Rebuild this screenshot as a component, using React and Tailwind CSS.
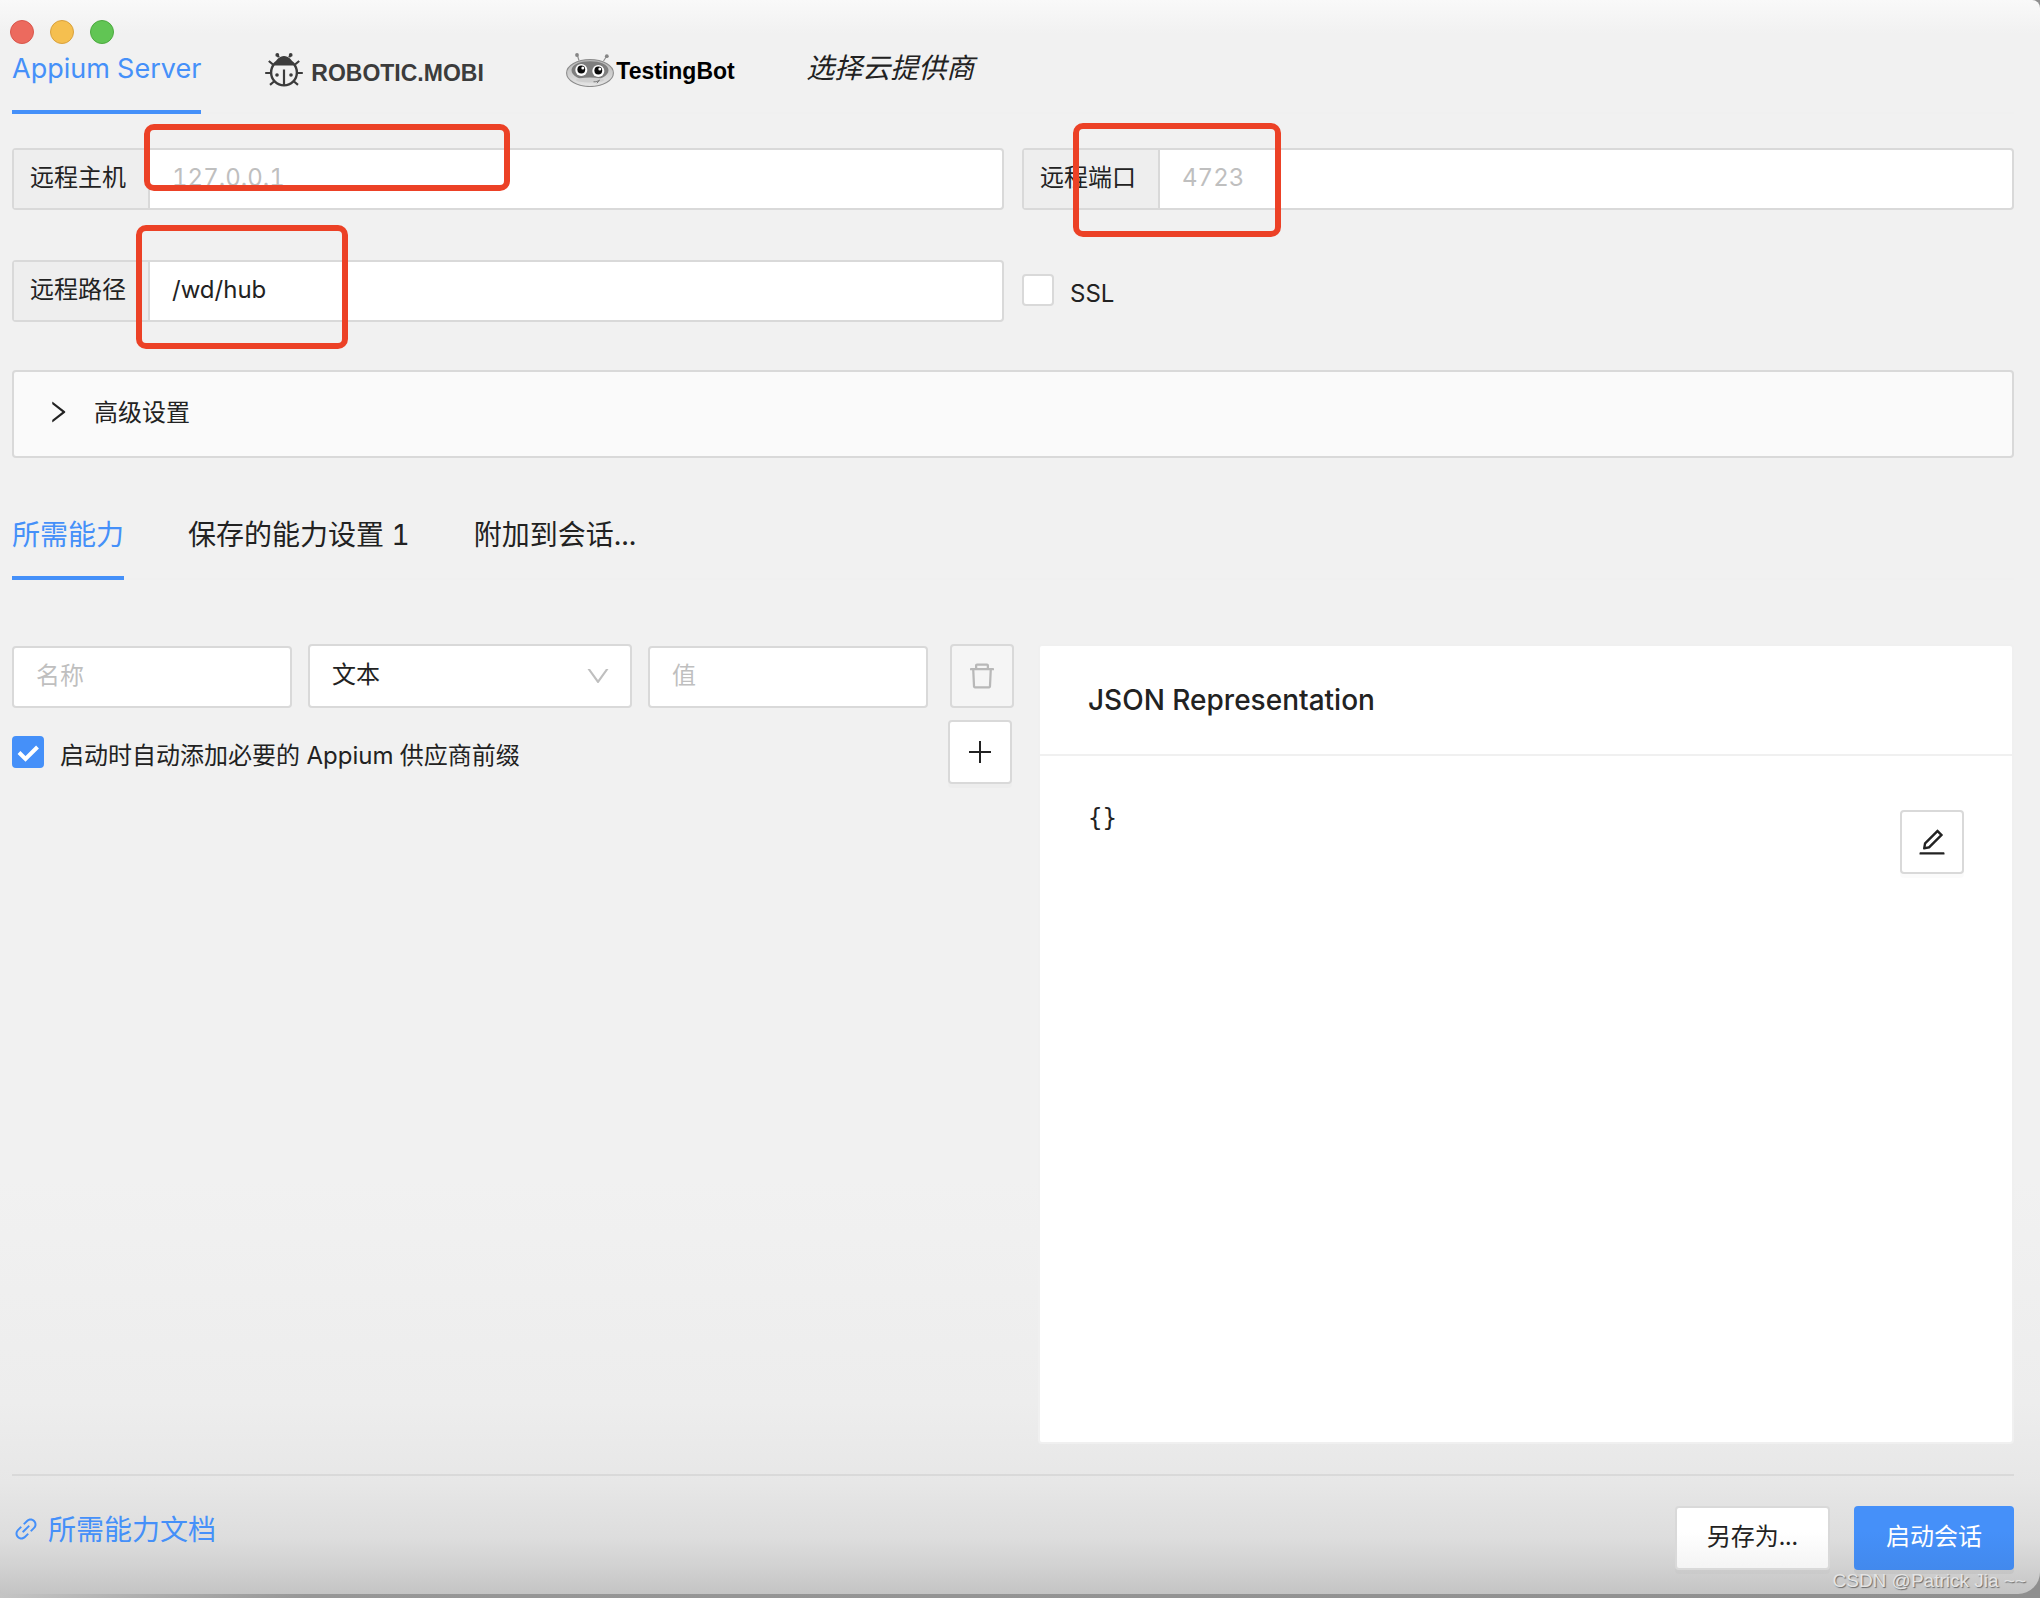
import { useState } from "react";
import {
  AiOutlineDelete,
  AiOutlineDown,
  AiOutlineEdit,
  AiOutlineLink,
  AiOutlineRight,
} from "react-icons/ai";

function RoboticIcon() {
  return (
    <svg viewBox="0 0 38 34" className="h-[34px] w-[38px]" fill="none" stroke="#3c3c3c" aria-hidden="true">
      <circle cx="19" cy="19.5" r="12.9" strokeWidth="2.4" />
      <path d="M9.5 12.5C10.8 6.500 14.500 3 19 3s8.200 3.500 9.500 9.500z" fill="#3c3c3c" stroke="none" />
      <path
        d="M19 16.500V32M13.800 4.200 12.500 2M24.200 4.200 25.500 2M8 11.500 3.800 8M30 11.500 34.200 8M6.200 20H.2M31.800 20H37.800M9 28.500 5 31.800M29 28.500 33 31.800"
        strokeWidth="2.2"
      />
      <g fill="#3c3c3c" stroke="none">
        <circle cx="12.300" cy="1.900" r="1.900" />
        <circle cx="25.700" cy="1.900" r="1.900" />
        <circle cx="12" cy="22" r="1.800" />
        <circle cx="26" cy="22" r="1.800" />
      </g>
    </svg>
  );
}

function TestingBotIcon() {
  return (
    <svg viewBox="0 0 48 34" className="h-[34px] w-[48px]" aria-hidden="true">
      <defs>
        <linearGradient id="botHead" x1="0" y1="0" x2="0" y2="1">
          <stop offset="0" stopColor="#b5b5b5" />
          <stop offset="0.6" stopColor="#d2d2d2" />
          <stop offset="1" stopColor="#e6e6e6" />
        </linearGradient>
      </defs>
      <path d="M13 7.500 11.300 2M37.500 8 40.500 3.500" stroke="#909090" strokeWidth="1.200" />
      <circle cx="11" cy="2" r="1.900" fill="#858585" />
      <circle cx="40.800" cy="3.200" r="1.900" fill="#858585" />
      <ellipse cx="24" cy="20" rx="23.400" ry="13.500" fill="url(#botHead)" stroke="#8c8c8c" strokeWidth="1.100" />
      <path d="M5.500 17C6 11 14 8.200 24 8.200S42 11 42.500 17c0 6-8 10-18.500 10S5.500 23 5.500 17z" fill="#7e7e7e" />
      <ellipse cx="24" cy="27" rx="14" ry="2.500" fill="#cfcfcf" />
      <circle cx="15.300" cy="17" r="6" fill="#fff" />
      <circle cx="32.300" cy="18" r="6" fill="#fff" />
      <circle cx="15.300" cy="16.500" r="3.900" fill="#0a0a0a" />
      <circle cx="32.300" cy="17.500" r="3.900" fill="#0a0a0a" />
      <circle cx="16.800" cy="15" r="1.500" fill="#fff" />
      <circle cx="33.800" cy="16" r="1.500" fill="#fff" />
      <path d="M27.500 28.800C30 29 32 28.300 33.500 27M31 30.200 33.500 27" stroke="#777" strokeWidth="1" fill="none" />
    </svg>
  );
}

function Tab({ active, onClick, children, className = "h-[50px] text-[28px]" }) {
  return (
    <button
      type="button"
      role="tab"
      aria-selected={active}
      onClick={onClick}
      className={
        "border-b-4 pb-4 whitespace-nowrap " +
        (active ? "border-[#4590f9] text-[#4590f9]" : "border-transparent")
      }
    >
      <span className={"flex items-center " + className}>{children}</span>
    </button>
  );
}

function Highlight({ className }) {
  return (
    <div
      aria-hidden="true"
      className={"pointer-events-none absolute rounded-[10px] border-[6px] border-[#ec4126] " + className}
    />
  );
}

function AddonInput({ id, label, children, ...rest }) {
  return (
    <div className="relative flex h-[62px] min-w-0 rounded-sm border-2 border-[#d9d9d9] bg-white">
      <label htmlFor={id} className="flex w-[136px] shrink-0 items-center border-r-2 border-[#d9d9d9] bg-[#eeeeee] pb-0.5 pl-4">
        {label}
      </label>
      <input
        id={id}
        className="min-w-0 flex-1 bg-transparent px-[22px] pb-0.5 outline-none placeholder:text-[#bfbfbf]"
        {...rest}
      />
      {children}
    </div>
  );
}

function Checkbox({ id, label, ...rest }) {
  return (
    <div className="flex items-center">
      <span className="relative flex size-8 shrink-0">
        <input
          id={id}
          type="checkbox"
          className="peer size-8 appearance-none rounded-sm border-2 border-[#d9d9d9] bg-white checked:border-[#4590f9] checked:bg-[#4590f9]"
          {...rest}
        />
        <svg
          viewBox="0 0 32 32"
          className="pointer-events-none absolute inset-0 hidden size-8 peer-checked:block"
          fill="none"
          stroke="#fff"
          strokeWidth="4"
          aria-hidden="true"
        >
          <path d="M7 16.500 13.500 23 25.500 11" />
        </svg>
      </span>
      <label htmlFor={id} className="pt-2 pl-4 leading-8">
        {label}
      </label>
    </div>
  );
}

const textBox =
  "h-[62px] w-full min-w-0 rounded-sm border-2 border-[#d9d9d9] bg-white px-[22px] pb-1 outline-none placeholder:text-[#bfbfbf]";
const iconButton = "flex size-16 shrink-0 items-center justify-center rounded-sm border-2 border-[#d9d9d9]";

export default function App() {
  const [server, setServer] = useState(0);
  const [section, setSection] = useState(0);

  return (
    <div className="min-h-screen bg-linear-to-r from-[#c4c4c4] via-[#979797] via-15% to-[#8f8f8f] pb-1 font-[Inter,'Noto_Sans_CJK_SC',sans-serif] text-2xl text-[#222222] tabular-nums">
      <div className="relative flex min-h-[calc(100vh-4px)] flex-col rounded-tr-lg rounded-br-[22px] rounded-bl-md bg-[linear-gradient(#f9f9f9_0px,#f1f1f1_34px,#f1f1f1_74%,#ededed_88%,#e7e7e7_93%,#dddddd_96.500%,#d0d0d0_98.500%,#c4c4c4_100%)] pr-[26px] pb-6 pl-3">
        <div className="-ml-0.5 flex gap-4 pt-5">
          <button type="button" aria-label="关闭" className="size-6 rounded-full border border-[#d9564b] bg-[#ec6a5e]" />
          <button type="button" aria-label="最小化" className="size-6 rounded-full border border-[#d9a13d] bg-[#f5bf4f]" />
          <button type="button" aria-label="缩放" className="size-6 rounded-full border border-[#4caa3f] bg-[#61c554]" />
        </div>

        <div role="tablist" className="flex gap-16 shadow-[inset_0_-2px_0_#f0f0f0]">
          <Tab className="h-[50px] text-[27px]" active={server === 0} onClick={() => setServer(0)}>
            Appium Server
          </Tab>
          <Tab active={server === 1} onClick={() => setServer(1)}>
            <span className="flex w-[237px] items-center gap-2 pt-0.5 font-['Liberation_Sans',sans-serif] text-[23px] font-bold text-[#3c3c3c]">
              <RoboticIcon />
              <span className="pt-1.5">ROBOTIC.MOBI</span>
            </span>
          </Tab>
          <Tab active={server === 2} onClick={() => setServer(2)}>
            <span className="flex w-[176px] items-center gap-0.5 pt-0.5 font-['Liberation_Sans',sans-serif] text-[23px] font-bold text-black">
              <TestingBotIcon />
              <span className="pt-0.5">TestingBot</span>
            </span>
          </Tab>
          <Tab active={server === 3} onClick={() => setServer(3)}>
            <span className="italic">选择云提供商</span>
          </Tab>
        </div>

        <div className="mt-[34px] grid grid-cols-2 gap-x-[18px] gap-y-[50px]">
          <AddonInput id="host" label="远程主机" placeholder="127.0.0.1">
            <Highlight className="-top-[26px] left-[130px] h-[67px] w-[366px]" />
          </AddonInput>
          <AddonInput id="port" label="远程端口" placeholder="4723">
            <Highlight className="-top-[27px] left-[49px] h-[114px] w-[208px]" />
          </AddonInput>
          <AddonInput id="path" label="远程路径" defaultValue="/wd/hub">
            <Highlight className="-top-[37px] left-[122px] h-[124px] w-[212px]" />
          </AddonInput>
          <div className="flex items-center pb-0.5">
            <Checkbox id="ssl" label="SSL" />
          </div>
        </div>

        <button
          type="button"
          aria-expanded="false"
          className="mt-12 flex h-[88px] items-center gap-[22px] rounded-sm border-2 border-[#d9d9d9] bg-[#fafafa] pb-1 pl-[30px]"
        >
          <AiOutlineRight className="size-7" />
          <span className="pt-0.5">高级设置</span>
        </button>

        <div role="tablist" className="mt-[50px] flex gap-16 shadow-[inset_0_-2px_0_#f0f0f0]">
          <Tab className="h-[52px] pt-1 text-[28px]" active={section === 0} onClick={() => setSection(0)}>
            所需能力
          </Tab>
          <Tab className="h-[52px] pt-1 text-[28px]" active={section === 1} onClick={() => setSection(1)}>
            保存的能力设置 1
          </Tab>
          <Tab className="h-[52px] pt-1 text-[28px]" active={section === 2} onClick={() => setSection(2)}>
            附加到会话...
          </Tab>
        </div>

        <div className="mt-16 grid flex-1 grid-cols-[minmax(0,1002fr)_minmax(0,976fr)] gap-6">
          <div>
            <div className="grid grid-cols-[minmax(0,280fr)_minmax(0,324fr)_minmax(0,280fr)_70px] items-end gap-4">
              <input aria-label="名称" placeholder="名称" className={textBox} />
              <div className="relative flex">
                <select
                  aria-label="类型"
                  className="h-16 w-full appearance-none rounded-sm border-2 border-[#d9d9d9] bg-white px-[22px] pb-0.5 outline-none"
                >
                  <option>文本</option>
                </select>
                <AiOutlineDown className="pointer-events-none absolute top-[18px] right-5 size-7 text-[#bfbfbf]" />
              </div>
              <input aria-label="值" placeholder="值" className={textBox} />
              <button
                type="button"
                disabled
                aria-label="删除"
                className={iconButton + " justify-self-end bg-[#f5f5f5] text-[#b8b8b8]"}
              >
                <AiOutlineDelete className="size-8" />
              </button>
            </div>
            <div className="mt-3 flex items-center justify-between pr-0.5">
              <Checkbox id="prefix" label="启动时自动添加必要的 Appium 供应商前缀" defaultChecked />
              <button type="button" aria-label="添加" className={iconButton + " bg-white shadow-[0_4px_0_rgba(0,0,0,0.016)]"}>
                <svg viewBox="0 0 32 32" className="size-8" stroke="currentColor" strokeWidth="2" aria-hidden="true">
                  <path d="M16 5V27M5 16H27" />
                </svg>
              </button>
            </div>
          </div>

          <section className="flex flex-col rounded-sm border-2 border-[#f0f0f0] bg-white">
            <h2 className="flex h-[110px] items-center border-b-2 border-[#f0f0f0] px-12 pt-0.5 text-[28px] font-medium">
              JSON Representation
            </h2>
            <div className="flex items-start justify-between px-12 pt-[54px]">
              <pre className="font-['DejaVu_Sans_Mono',monospace] text-2xl leading-4">{"{}"}</pre>
              <button type="button" aria-label="编辑" className={iconButton + " bg-white shadow-[0_4px_0_rgba(0,0,0,0.016)]"}>
                <AiOutlineEdit className="size-8" />
              </button>
            </div>
          </section>
        </div>

        <footer className="mt-[30px] flex items-start justify-between border-t-2 border-[#d9d9d9] pt-[30px]">
          <a href="#docs" className="flex items-center gap-2 text-[28px] leading-[44px] text-[#4590f9]">
            <AiOutlineLink className="size-7" />
            <span className="pt-0.5">所需能力文档</span>
          </a>
          <div className="flex gap-6">
            <button
              type="button"
              className="h-16 rounded-sm border-2 border-[#d9d9d9] bg-linear-to-b from-white from-40% to-[#f4f4f4] px-[30px] pb-0.5 shadow-[0_4px_0_rgba(0,0,0,0.016)]"
            >
              另存为...
            </button>
            <button
              type="button"
              className="h-16 rounded-sm bg-linear-to-b from-[#4590f9] from-40% to-[#4289ed] px-8 pb-0.5 text-white shadow-[0_4px_0_rgba(0,0,0,0.043)]"
            >
              启动会话
            </button>
          </div>
        </footer>

        <p className="pointer-events-none absolute right-3.5 bottom-0 font-['Liberation_Sans',sans-serif] text-[19px] leading-[26px] text-[#e4e4e4] [text-shadow:1px_1px_1px_#6b6b6b]">
          CSDN @Patrick Jia ~~
        </p>
      </div>
    </div>
  );
}
